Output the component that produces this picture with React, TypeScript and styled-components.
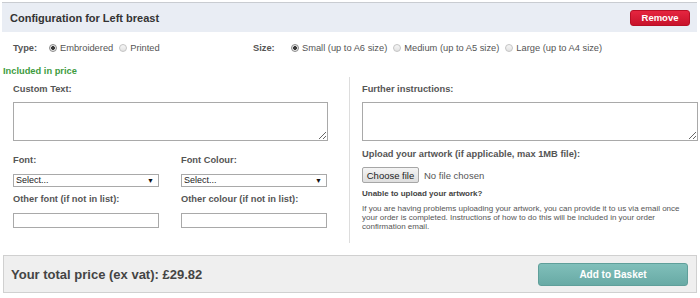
import styled, { createGlobalStyle } from 'styled-components';

const GlobalStyle = createGlobalStyle`
  html, body {
    margin: 0;
    padding: 0;
    background: #ffffff;
  }
  body {
    font-family: "Liberation Sans", Arial, sans-serif;
    color: #555555;
  }
`;

const Wrapper = styled.div`
  width: 700px;
  height: 298px;
  padding: 2px 3px 0 2px;
  box-sizing: border-box;
`;

const Header = styled.div`
  height: 30px;
  display: flex;
  align-items: center;
  justify-content: space-between;
  padding: 0 7px 0 8px;
  background: #e9edf4;
  border-top: 1px solid #c9ccd1;
  box-sizing: border-box;
`;

const Title = styled.div`
  font-size: 11px;
  font-weight: bold;
  color: #333333;
`;

const RemoveButton = styled.button`
  width: 60px;
  height: 16px;
  padding: 0;
  border: 1px solid #b80f25;
  border-radius: 3px;
  background: linear-gradient(#e52540, #c8132b);
  color: #ffffff;
  font-family: "Liberation Sans", Arial, sans-serif;
  font-size: 9.5px;
  font-weight: bold;
  cursor: pointer;
`;

const OptionsRow = styled.div`
  display: flex;
  align-items: center;
  height: 30px;
  padding-left: 11px;
  margin-top: 1px;
`;

const OptionGroup = styled.div<{ $width?: number }>`
  display: flex;
  align-items: center;
  width: ${(p) => (p.$width ? `${p.$width}px` : 'auto')};
`;

const GroupLabel = styled.span<{ $width: number }>`
  width: ${(p) => p.$width}px;
  font-size: 9.3px;
  font-weight: bold;
  color: #555555;
`;

const RadioItem = styled.label`
  display: flex;
  align-items: center;
  margin-right: 6px;
  font-size: 9.3px;
  color: #555555;
`;

const RadioDot = styled.span<{ $checked?: boolean }>`
  width: 8px;
  height: 8px;
  margin-right: 3px;
  border-radius: 50%;
  box-sizing: border-box;
  border: 1px solid ${(p) => (p.$checked ? '#8a8a8a' : '#c4c4c4')};
  background: ${(p) =>
    p.$checked
      ? 'radial-gradient(circle, #3a3a3a 0 1.6px, #e8e8e8 2.2px)'
      : 'linear-gradient(#f6f6f6, #e2e2e2)'};
`;

const Included = styled.div`
  margin-top: 3px;
  padding-left: 1px;
  font-size: 9.3px;
  font-weight: bold;
  color: #3e9b3e;
  line-height: 11px;
`;

const Columns = styled.div`
  display: grid;
  grid-template-columns: 347px 1fr;
  height: 166px;
`;

const LeftCol = styled.div`
  padding: 7px 0 0 11px;
`;

const RightCol = styled.div`
  border-left: 1px solid #dddddd;
  padding: 7px 0 0 12px;
`;

const Label = styled.div<{ $mt?: number }>`
  font-size: 9.3px;
  font-weight: bold;
  color: #555555;
  line-height: 11px;
  margin-top: ${(p) => p.$mt ?? 0}px;
`;

const TextArea = styled.textarea<{ $width: number }>`
  display: block;
  width: ${(p) => p.$width}px;
  height: 39px;
  margin-top: 7px;
  padding: 2px;
  box-sizing: border-box;
  border: 1px solid #a9a9a9;
  font-family: "Liberation Sans", Arial, sans-serif;
  font-size: 9px;
  outline: none;
`;

const FieldGrid = styled.div`
  display: grid;
  grid-template-columns: 146px 146px;
  column-gap: 22px;
  width: 314px;
  margin-top: 14px;
`;

const Field = styled.div``;

const SelectBox = styled.div`
  position: relative;
  margin-top: 8px;
  width: 146px;
`;

const Select = styled.select`
  display: block;
  width: 146px;
  height: 13px;
  padding: 0 0 0 2px;
  box-sizing: border-box;
  border: 1px solid #a9a9a9;
  border-radius: 0;
  background: #ffffff;
  appearance: none;
  font-family: "Liberation Sans", Arial, sans-serif;
  font-size: 9px;
  line-height: 11px;
  color: #222222;
  outline: none;
`;

const SelectArrow = styled.span`
  position: absolute;
  right: 5px;
  top: 2px;
  font-size: 7px;
  line-height: 9px;
  color: #111111;
  pointer-events: none;
`;

const TextInput = styled.input`
  display: block;
  width: 146px;
  height: 15px;
  margin-top: 8px;
  box-sizing: border-box;
  border: 1px solid #a9a9a9;
  outline: none;
`;

const UploadRow = styled.div`
  display: flex;
  align-items: center;
  margin-top: 7px;
`;

const FileButton = styled.button`
  width: 57px;
  height: 16px;
  padding: 0;
  box-sizing: border-box;
  border: 1px solid #a6a6a6;
  border-radius: 2px;
  background: linear-gradient(#f4f4f4, #dedede);
  font-family: "Liberation Sans", Arial, sans-serif;
  font-size: 9.5px;
  color: #222222;
`;

const FileStatus = styled.span`
  margin-left: 5px;
  font-size: 9.5px;
  color: #555555;
`;

const SmallHeading = styled.div`
  margin-top: 6px;
  font-size: 8px;
  font-weight: bold;
  color: #444444;
  line-height: 10px;
`;

const Note = styled.p`
  margin: 5px 0 0;
  width: 330px;
  font-size: 8px;
  line-height: 9px;
  color: #555555;
`;

const Footer = styled.div`
  display: flex;
  align-items: center;
  justify-content: space-between;
  height: 38px;
  margin: 12px 0 0 1px;
  padding: 0 8px 0 7px;
  box-sizing: border-box;
  background: #efefef;
  border: 1px solid #d0d0d0;
`;

const Price = styled.div`
  font-size: 13px;
  font-weight: bold;
  color: #444444;
`;

const BasketButton = styled.button`
  width: 150px;
  height: 23px;
  padding: 0;
  border: 1px solid #5f9f9a;
  border-radius: 3px;
  background: linear-gradient(#80bfba, #68aaa5);
  color: #ffffff;
  font-family: "Liberation Sans", Arial, sans-serif;
  font-size: 10px;
  font-weight: bold;
  cursor: pointer;
`;

const sizes = [
  { label: 'Small (up to A6 size)', checked: true },
  { label: 'Medium (up to A5 size)', checked: false },
  { label: 'Large (up to A4 size)', checked: false },
];

export default function App() {
  return (
    <>
      <GlobalStyle />
      <Wrapper>
        <Header>
          <Title>Configuration for Left breast</Title>
          <RemoveButton>Remove</RemoveButton>
        </Header>

        <OptionsRow>
          <OptionGroup $width={240}>
            <GroupLabel $width={36}>Type:</GroupLabel>
            <RadioItem>
              <RadioDot $checked />
              Embroidered
            </RadioItem>
            <RadioItem>
              <RadioDot />
              Printed
            </RadioItem>
          </OptionGroup>
          <OptionGroup>
            <GroupLabel $width={38}>Size:</GroupLabel>
            {sizes.map((s) => (
              <RadioItem key={s.label}>
                <RadioDot $checked={s.checked} />
                {s.label}
              </RadioItem>
            ))}
          </OptionGroup>
        </OptionsRow>

        <Included>Included in price</Included>

        <Columns>
          <LeftCol>
            <Label>Custom Text:</Label>
            <TextArea $width={315} />
            <FieldGrid>
              <Field>
                <Label>Font:</Label>
                <SelectBox>
                  <Select defaultValue="">
                    <option value="">Select...</option>
                  </Select>
                  <SelectArrow>▼</SelectArrow>
                </SelectBox>
                <Label $mt={7}>Other font (if not in list):</Label>
                <TextInput />
              </Field>
              <Field>
                <Label>Font Colour:</Label>
                <SelectBox>
                  <Select defaultValue="">
                    <option value="">Select...</option>
                  </Select>
                  <SelectArrow>▼</SelectArrow>
                </SelectBox>
                <Label $mt={7}>Other colour (if not in list):</Label>
                <TextInput />
              </Field>
            </FieldGrid>
          </LeftCol>

          <RightCol>
            <Label>Further instructions:</Label>
            <TextArea $width={336} />
            <Label $mt={8}>Upload your artwork (if applicable, max 1MB file):</Label>
            <UploadRow>
              <FileButton>Choose file</FileButton>
              <FileStatus>No file chosen</FileStatus>
            </UploadRow>
            <SmallHeading>Unable to upload your artwork?</SmallHeading>
            <Note>
              If you are having problems uploading your artwork, you can provide it to us via email once
              your order is completed. Instructions of how to do this will be included in your order
              confirmation email.
            </Note>
          </RightCol>
        </Columns>

        <Footer>
          <Price>Your total price (ex vat): £29.82</Price>
          <BasketButton>Add to Basket</BasketButton>
        </Footer>
      </Wrapper>
    </>
  );
}
